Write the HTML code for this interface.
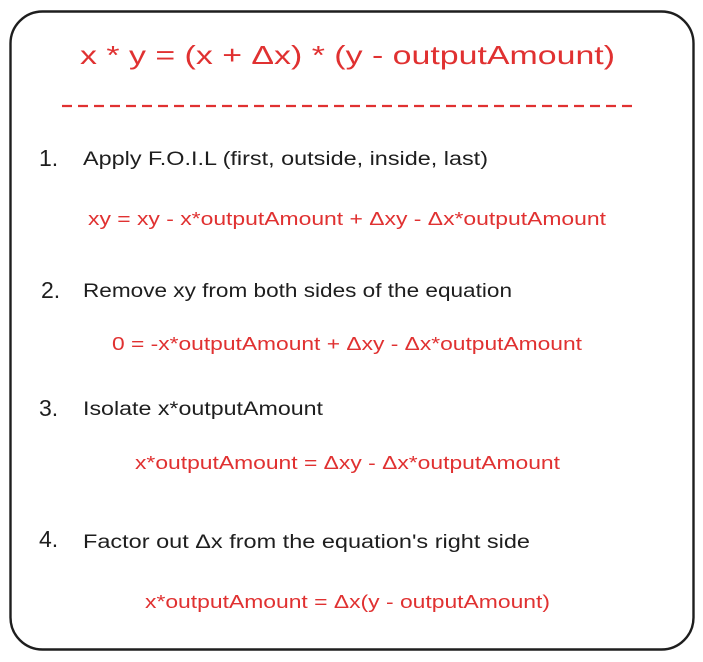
<!DOCTYPE html>
<html><head><meta charset="utf-8"><style>
html,body{margin:0;padding:0;background:#fff;width:703px;height:662px;overflow:hidden}
text{font-family:"Liberation Sans","DejaVu Sans",sans-serif}
</style></head><body>
<svg width="703" height="662" xmlns="http://www.w3.org/2000/svg">
<rect x="10.5" y="11.5" width="683" height="638" rx="32" fill="#fff" stroke="#1e1e1e" stroke-width="2.4"/>
<g fill="#e03131">
<text x="80" y="64" font-size="26" textLength="535" lengthAdjust="spacingAndGlyphs">x * y = (x + Δx) * (y - outputAmount)</text>
<text x="88" y="225" font-size="18" textLength="518" lengthAdjust="spacingAndGlyphs">xy = xy - x*outputAmount + Δxy - Δx*outputAmount</text>
<text x="112" y="350" font-size="18" textLength="470" lengthAdjust="spacingAndGlyphs">0 = -x*outputAmount + Δxy - Δx*outputAmount</text>
<text x="135" y="469" font-size="18" textLength="425" lengthAdjust="spacingAndGlyphs">x*outputAmount  = Δxy - Δx*outputAmount</text>
<text x="145" y="608" font-size="18" textLength="405" lengthAdjust="spacingAndGlyphs">x*outputAmount  = Δx(y - outputAmount)</text>
</g>
<line x1="62" y1="106" x2="632" y2="106" stroke="#e03131" stroke-width="2.2" stroke-dasharray="10 6"/>
<g fill="#1e1e1e" font-size="19">
<text x="39" y="166" font-size="23">1.</text>
<text x="83" y="165" textLength="405" lengthAdjust="spacingAndGlyphs">Apply F.O.I.L (first, outside, inside, last)</text>
<text x="41" y="298" font-size="23">2.</text>
<text x="83" y="297" textLength="429" lengthAdjust="spacingAndGlyphs">Remove xy from both sides of the equation</text>
<text x="39" y="416" font-size="23">3.</text>
<text x="83" y="415" textLength="240" lengthAdjust="spacingAndGlyphs">Isolate x*outputAmount</text>
<text x="39" y="547" font-size="23">4.</text>
<text x="83" y="548" textLength="447" lengthAdjust="spacingAndGlyphs">Factor out Δx from the equation's right side</text>
</g>
</svg>
</body></html>
